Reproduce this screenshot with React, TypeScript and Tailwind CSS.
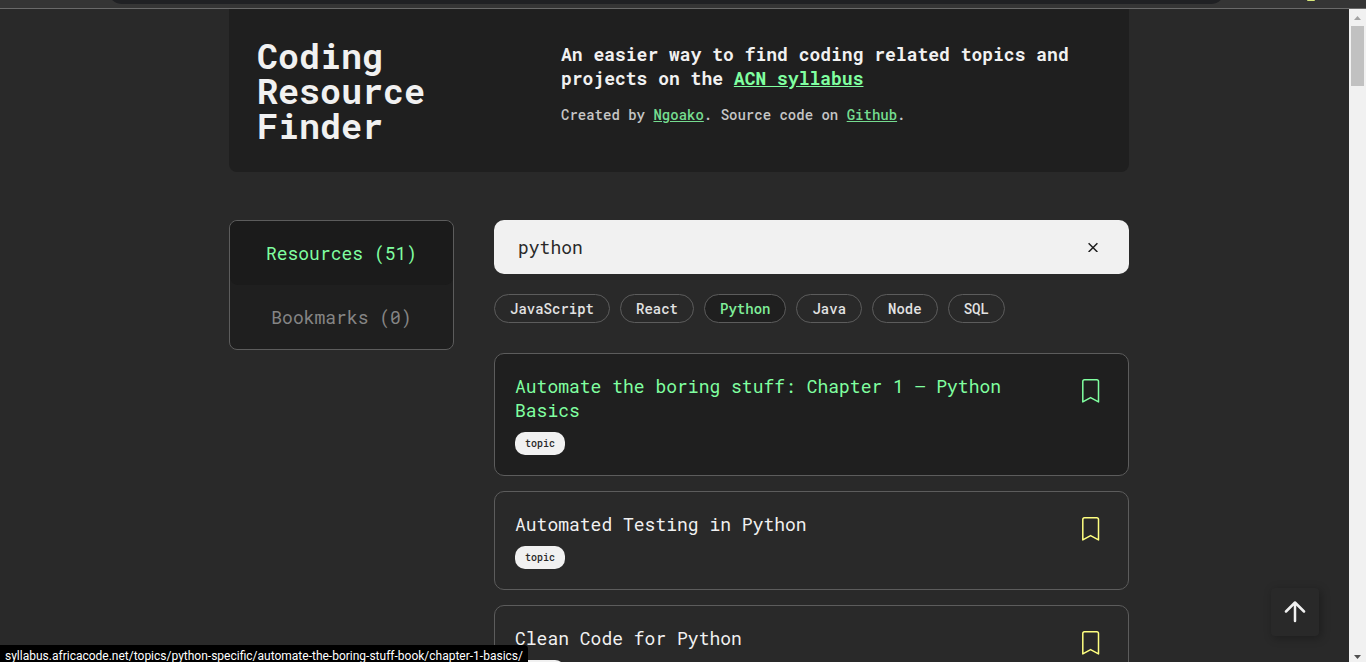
import { useState } from "react";

const MONO = "font-['Roboto_Mono','DejaVu_Sans_Mono',monospace]";

const filters = ["JavaScript", "React", "Python", "Java", "Node", "SQL"];

const resources = [
  {
    title: "Automate the boring stuff: Chapter 1 – Python Basics",
    href: "#chapter-1-basics",
    hovered: true,
  },
  { title: "Automated Testing in Python", href: "#automated-testing", hovered: false },
  { title: "Clean Code for Python", href: "#clean-code", hovered: false },
];

function BookmarkIcon() {
  return (
    <svg width="18" height="24" viewBox="0 0 18 24" fill="none" stroke="currentColor" strokeWidth="1.5" strokeLinejoin="round">
      <path d="M0.8 22.9V2.6C0.8 1.5 1.4 0.8 2.5 0.8H14.8C15.9 0.8 16.5 1.5 16.5 2.6V22.9L8.6 18.6Z" />
    </svg>
  );
}

function BrowserEdge() {
  return (
    <div className="flex h-[9px] shrink-0 items-start border-b border-[#6a6a6a] bg-[#353535] pl-[108px]">
      <div className="flex h-1 w-[1117px] flex-col justify-end overflow-hidden">
        <div className="h-7 shrink-0 rounded-full bg-[#202124]" />
      </div>
      <div className="ml-[82px] h-px w-2 rounded-b-full bg-[#d9e87a]" />
    </div>
  );
}

function Scrollbar() {
  return (
    <div className="flex w-[17px] shrink-0 flex-col items-center bg-[#f1f1f1]">
      <svg className="shrink-0" width="17" height="17" viewBox="0 0 17 17" fill="#a3a3a3">
        <path d="M5 11H12L8.5 7Z" />
      </svg>
      <div className="h-[60px] w-[13px] bg-[#c1c1c1]" />
      <svg className="mt-auto shrink-0" width="17" height="17" viewBox="0 0 17 17" fill="#505050">
        <path d="M5 10H12L8.5 14Z" />
      </svg>
    </div>
  );
}

function Header() {
  return (
    <header className="flex rounded-b-lg bg-[#1f1f1f] px-7 py-[29px]">
      <h1 className="w-[304px] shrink-0 text-[35px] leading-[35px] font-bold">
        Coding
        <br />
        Resource
        <br />
        Finder
      </h1>
      <div className="pt-1">
        <p className="text-lg leading-6 font-bold">
          An easier way to find coding related topics and projects on the{" "}
          <a href="#syllabus" className="text-[#80ffa0] underline">
            ACN syllabus
          </a>
        </p>
        <p className="mt-[15px] text-sm leading-5 font-medium text-[#c6c6c6]">
          Created by{" "}
          <a href="#author" className="text-[#75dc90] underline">
            Ngoako
          </a>
          . Source code on{" "}
          <a href="#source" className="text-[#75dc90] underline">
            Github
          </a>
          .
        </p>
      </div>
    </header>
  );
}

export default function App() {
  const [query, setQuery] = useState("python");

  return (
    <div className={`relative flex h-screen flex-col overflow-hidden bg-[#292929] text-[#f1f1f1] ${MONO}`}>
      <BrowserEdge />
      <div className="flex min-h-0 flex-1">
        <div className="min-w-0 flex-1 overflow-hidden pl-[9px]">
          <div className="mx-auto max-w-[900px]">
            <Header />
            <div className="mt-12 flex items-start gap-10">
              <nav className="flex w-[225px] shrink-0 flex-col rounded-lg border border-[#5c5c5c] bg-[#1f1f1f] text-lg">
                <button type="button" className="h-16 rounded-lg bg-[#1b1b1b] text-[#80ffa0]">
                  Resources (51)
                </button>
                <button type="button" className="h-16 rounded-lg text-[#858585]">
                  Bookmarks (0)
                </button>
              </nav>
              <main className="min-w-0 flex-1">
                <div className="flex h-[54px] items-center rounded-[10px] bg-[#f1f1f1] px-6 text-[#292929]">
                  <label htmlFor="search" className="sr-only">
                    Search resources
                  </label>
                  <input
                    id="search"
                    type="text"
                    value={query}
                    onChange={(e) => setQuery(e.target.value)}
                    className="h-10 min-w-0 flex-1 bg-transparent text-lg outline-none"
                  />
                  <button
                    type="button"
                    aria-label="Clear search"
                    onClick={() => setQuery("")}
                    className="flex size-6 items-center justify-center"
                  >
                    <svg width="10" height="10" viewBox="0 0 10 10" stroke="#1f1f1f" strokeWidth="1.5">
                      <path d="M0.6 1.2L9.4 10M9.4 1.2L0.6 10" />
                    </svg>
                  </button>
                </div>
                <div className="mt-5 flex flex-wrap gap-2.5">
                  {filters.map((name) => (
                    <button
                      key={name}
                      type="button"
                      className={`h-[29px] rounded-full border border-[#5c5c5c] px-[15px] text-sm font-medium ${
                        name === "Python" ? "bg-[#1f1f1f] text-[#80f09a]" : "text-[#e2e2e2]"
                      }`}
                    >
                      {name}
                    </button>
                  ))}
                </div>
                <ul className="mt-[30px] flex flex-col gap-[15px]">
                  {resources.map((item) => (
                    <li
                      key={item.title}
                      className={`flex items-start justify-between gap-8 rounded-[10px] border border-[#5c5c5c] py-5 pr-7 pl-5 ${
                        item.hovered ? "bg-[#1f1f1f]" : ""
                      }`}
                    >
                      <div>
                        <a
                          href={item.href}
                          className={`block text-lg leading-6 ${item.hovered ? "text-[#80ffa0]" : ""}`}
                        >
                          {item.title}
                        </a>
                        <span className="mt-2.5 flex h-[23px] w-[50px] items-center justify-center rounded-[10px] bg-[#f1f1f1] text-[10px] font-medium text-[#292929]">
                          topic
                        </span>
                      </div>
                      <button
                        type="button"
                        aria-label={`Bookmark ${item.title}`}
                        className={`mt-[5px] shrink-0 ${item.hovered ? "text-[#80ffa0]" : "text-[#ffff80]"}`}
                      >
                        <BookmarkIcon />
                      </button>
                    </li>
                  ))}
                </ul>
              </main>
            </div>
          </div>
        </div>
        <Scrollbar />
      </div>

      <button
        type="button"
        aria-label="Back to top"
        className="absolute right-[47px] bottom-[26px] flex size-12 items-center justify-center rounded bg-[#292929] shadow-[2px_2px_10px_rgba(0,0,0,0.3)]"
      >
        <svg width="22" height="22" viewBox="0 0 22 22" fill="none" stroke="#f1f1f1" strokeWidth="2.5" strokeLinecap="round" strokeLinejoin="round">
          <path d="M11 20V1.5M2 10.5L11 1.5L20 10.5" />
        </svg>
      </button>

      <div className="absolute bottom-0 left-0 h-[17px] rounded-tr bg-black px-[5px] pt-[3px] font-['Segoe_UI','Roboto',sans-serif] text-xs leading-4 whitespace-nowrap text-white">
        syllabus.africacode.net/topics/python-specific/automate-the-boring-stuff-book/chapter-1-basics/
      </div>
    </div>
  );
}
